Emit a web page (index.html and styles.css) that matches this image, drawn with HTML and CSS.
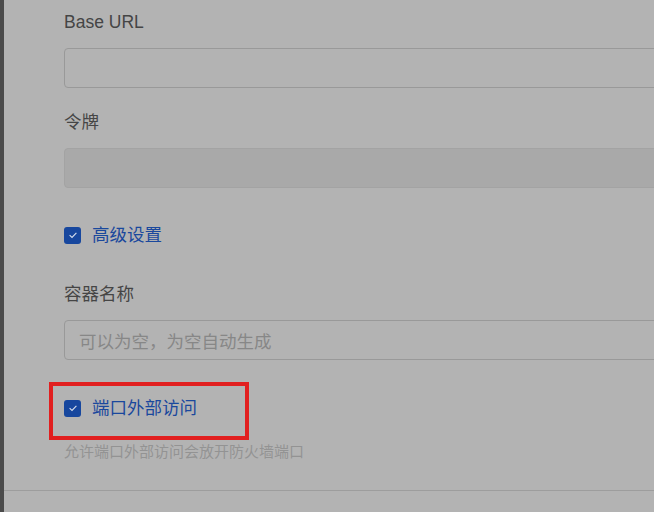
FILE: index.html
```html
<!DOCTYPE html>
<html lang="zh-CN">
<head>
<meta charset="utf-8">
<title>Form</title>
<link rel="stylesheet" href="styles.css">
</head>
<body>
<div class="page">
  <div class="edge"></div>
  <div class="dialog">
    <form class="form">
      <div class="field">
        <label class="label">Base URL</label>
        <div class="input"></div>
      </div>
      <div class="field">
        <label class="label">令牌</label>
        <div class="input disabled"></div>
      </div>
      <div class="check-row adv">
        <span class="box"><svg viewBox="0 0 16 16" width="16" height="16"><path d="M4.6 8.2 L7 10.4 L11.4 5.8" fill="none" stroke="#d8e0ee" stroke-width="1.1"/></svg></span>
        <span class="check-text">高级设置</span>
      </div>
      <div class="field name">
        <label class="label">容器名称</label>
        <div class="input"><span class="placeholder">可以为空，为空自动生成</span></div>
      </div>
      <div class="check-row port">
        <span class="box"><svg viewBox="0 0 16 16" width="16" height="16"><path d="M4.6 8.2 L7 10.4 L11.4 5.8" fill="none" stroke="#d8e0ee" stroke-width="1.1"/></svg></span>
        <span class="check-text">端口外部访问</span>
        <span class="highlight"></span>
      </div>
      <p class="hint">允许端口外部访问会放开防火墙端口</p>
    </form>
    <div class="footer"></div>
  </div>
</div>
</body>
</html>
```
FILE: styles.css
```css
html, body {
  margin: 0;
  padding: 0;
  width: 654px;
  height: 512px;
  overflow: hidden;
  background: #b3b3b3;
}
.page {
  display: flex;
  height: 512px;
  font-family: "Liberation Sans", "Noto Sans CJK SC", sans-serif;
}
.edge {
  width: 4px;
  flex: none;
  background: #4b4b4b;
}
.dialog {
  flex: 1;
  display: flex;
  flex-direction: column;
  min-width: 0;
  overflow: hidden;
}
.form {
  padding: 10px 0 0 60px;
  display: flex;
  flex-direction: column;
  height: 490px;
  box-sizing: border-box;
  margin: 0;
}
.field {
  display: flex;
  flex-direction: column;
  gap: 14px;
}
.field + .field {
  margin-top: 22px;
}
.label {
  font-size: 17.5px;
  line-height: 24px;
  color: #454545;
}
.input {
  width: 640px;
  flex: none;
  height: 40px;
  box-sizing: border-box;
  border: 1px solid #999999;
  border-radius: 4px;
  display: flex;
  align-items: center;
  padding-left: 14px;
}
.input.disabled {
  background: #a9a9a9;
  border-color: #a3a3a3;
}
.placeholder {
  font-size: 17.5px;
  color: #878787;
}
.check-row {
  position: relative;
  display: flex;
  align-items: center;
  gap: 11px;
  height: 24px;
}
.check-row.adv {
  margin-top: 35px;
}
.field.name {
  margin-top: 35px;
}
.check-row.port {
  margin-top: 36px;
}
.box {
  width: 17px;
  height: 17px;
  border-radius: 3px;
  background: #17479e;
  display: flex;
  align-items: center;
  justify-content: center;
  flex: none;
}
.box svg {
  display: block;
}
.check-text {
  font-size: 17.5px;
  color: #1a489d;
  line-height: 24px;
}
.highlight {
  position: absolute;
  left: -15px;
  top: -14px;
  width: 200px;
  height: 58px;
  box-sizing: border-box;
  border: 4px solid #e11f1f;
}
.hint {
  margin: 22px 0 0;
  font-size: 15px;
  line-height: 20px;
  color: #939393;
}
.footer {
  border-top: 1px solid #9d9d9d;
  flex: 1;
}
```
